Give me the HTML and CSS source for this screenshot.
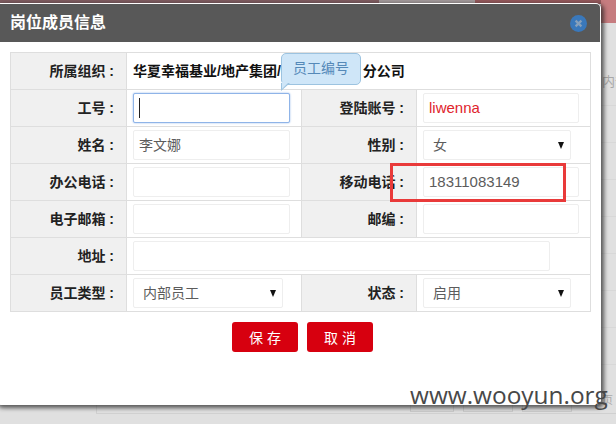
FILE: index.html
```html
<!DOCTYPE html>
<html lang="zh">
<head>
<meta charset="utf-8">
<title>岗位成员信息</title>
<link rel="stylesheet" href="styles.css">
</head>
<body>
<div class="backdrop">
  <div class="bg-top">
    <span class="seg seg-a"></span><span class="seg seg-b"></span><span class="seg seg-c"></span>
  </div>
  <div class="bg-right"></div>
  <div class="bg-lines"></div>
  <div class="bg-text">内部</div>
  <div class="bg-foot">
    <span class="bg-cell c1"></span><span class="bg-cell c2"></span><span class="bg-cell c2"></span><span class="bg-cell-text">页</span>
  </div>
</div>
<div class="dialog">
  <header class="head">
    <h1 class="title">岗位成员信息</h1>
    <svg class="close" width="17" height="17" viewBox="0 0 17 17"><circle cx="8.5" cy="8.5" r="8.5" fill="#3a78bb"/><path d="M5.6 5.6l5.8 5.8M11.4 5.6l-5.8 5.8" stroke="#87a0bb" stroke-width="2.2"/></svg>
  </header>
  <div class="body">
    <div class="form">
      <div class="row">
        <div class="lab l1">所属组织 :</div>
        <div class="val org"><span>华夏幸福基业/地产集团/</span><span class="gap"></span><span>分公司</span></div>
      </div>
      <div class="row">
        <div class="lab l1">工号 :</div>
        <div class="val v1"><div class="inp focus"><span class="caret"></span></div></div>
        <div class="lab l2">登陆账号 :</div>
        <div class="val v2"><div class="inp v2i red latin">liwenna</div></div>
      </div>
      <div class="row">
        <div class="lab l1">姓名 :</div>
        <div class="val v1"><div class="inp">李文娜</div></div>
        <div class="lab l2">性别 :</div>
        <div class="val v2"><div class="inp sel"><span class="pad">女</span><span class="arrow"></span></div></div>
      </div>
      <div class="row">
        <div class="lab l1">办公电话 :</div>
        <div class="val v1"><div class="inp"></div></div>
        <div class="lab l2">移动电话 :</div>
        <div class="val v2"><div class="inp v2i latin">18311083149</div></div>
      </div>
      <div class="row">
        <div class="lab l1">电子邮箱 :</div>
        <div class="val v1"><div class="inp"></div></div>
        <div class="lab l2">邮编 :</div>
        <div class="val v2"><div class="inp v2i"></div></div>
      </div>
      <div class="row">
        <div class="lab l1">地址 :</div>
        <div class="val"><div class="inp wide"></div></div>
      </div>
      <div class="row">
        <div class="lab l1">员工类型 :</div>
        <div class="val v1"><div class="inp sel s1"><span class="pad">内部员工</span><span class="arrow"></span></div></div>
        <div class="lab l2">状态 :</div>
        <div class="val v2"><div class="inp sel"><span class="pad">启用</span><span class="arrow"></span></div></div>
      </div>
    </div>
    <div class="actions">
      <button class="btn" type="button">保 存</button>
      <button class="btn" type="button">取 消</button>
    </div>
  </div>
  <div class="tip">员工编号</div>
  <div class="mark"></div>
  <div class="wm">www.wooyun.org</div>
</div>
</body>
</html>
```
FILE: styles.css
```css
html, body { margin: 0; padding: 0; }
body {
  width: 616px; height: 424px; overflow: hidden; position: relative;
  background: #e0e0e0;
  font-family: "Liberation Sans", "Noto Sans CJK SC", sans-serif;
}
.backdrop { position: absolute; inset: 0; overflow: hidden; }
.bg-top { height: 4px; display: flex; }
.seg { display: block; height: 100%; }
.seg-a { width: 379px; background: #7f5c60; }
.seg-b { width: 96px; background: #a39a9b; }
.seg-c { flex: 1; background: #94585b; }
.bg-right { position: absolute; left: 601px; top: 0; width: 15px; height: 23px; background: #c67c7f; }
.bg-lines {
  position: absolute; left: 601px; top: 105px; width: 15px; height: 290px;
  background: repeating-linear-gradient(to bottom, #d8d8d8 0, #d8d8d8 1px, transparent 1px, transparent 37px);
}
.bg-text { position: absolute; left: 602px; top: 74px; font-size: 13px; line-height: 16px; color: #a8a8a8; white-space: nowrap; }
.bg-foot {
  position: absolute; left: 96px; top: 404px; right: 0; height: 10px; box-sizing: border-box;
  border-left: 1px solid #d0d0d0; border-bottom: 1px solid #d0d0d0;
  display: flex; gap: 9px; padding-left: 313px;
}
.bg-cell { height: 8px; border: 1px solid #cccccc; border-top: 0; box-sizing: border-box; }
.c1 { width: 44px; }
.c2 { width: 50px; }
.bg-cell-text { font-size: 11px; line-height: 10px; color: #aaa; margin-left: 21px; margin-top: -9px; }
.dialog {
  position: absolute; left: -4px; top: 3px; width: 605px; height: 402px; box-sizing: border-box;
  background: #fff; border: 1px solid #fff; border-radius: 5px;
  box-shadow: 2px 2px 4px 1px rgba(30,30,30,.7);
  display: flex; flex-direction: column;
}
.head {
  height: 38px; background: #585858; border-radius: 4px 4px 0 0;
  display: flex; align-items: center; justify-content: space-between;
  padding: 0 13px; flex: none;
}
.title { margin: 0; font-size: 16px; font-weight: 700; color: #fff; line-height: 38px; }
.body { padding: 10px 0 0 13px; }
.form { width: 581px; border: 1px solid #dedede; box-sizing: border-box; }
.row { height: 37px; display: flex; border-bottom: 1px solid #dedede; box-sizing: border-box; }
.row:last-child { height: 36px; border-bottom: 0; }
.lab {
  background: #f0f0f0; font-size: 14px; font-weight: 700; color: #222;
  display: flex; align-items: center; justify-content: flex-end; box-sizing: border-box;
  border-right: 1px solid #dedede; padding: 0 12px 2px 0; flex: none; white-space: pre;
}
.l1 { width: 116px; }
.l2 { width: 116px; border-left: 1px solid #dedede; }
.val { padding: 3px 0 0 6px; font-size: 14px; flex: 1; box-sizing: border-box; }
.v1 { flex: none; width: 174px; }
.v2 { flex: 1; }
.org { font-weight: 700; color: #111; display: flex; align-items: center; padding: 0 0 2px 6px; white-space: nowrap; }
.gap { width: 82px; flex: none; }
.inp {
  width: 157px; height: 30px; box-sizing: border-box; border: 1px solid #eeeeee; border-radius: 2px;
  padding: 0 5px; font-size: 14px; line-height: 28px; color: #5c5c5c; background: #fff; position: relative;
}
.v2i { width: 156px; }
.latin { font-size: 15px; }
.focus { border: 1px solid #8fb4e8; box-shadow: 0 0 2px #8fb4e8; }
.caret { display: inline-block; width: 1px; height: 20px; background: #222; vertical-align: middle; margin-top: -2px; }
.red { color: #e0242c; }
.wide { width: 417px; }
.sel { width: 148px; }
.s1 { width: 150px; }
.pad { padding-left: 4px; }
.arrow { position: absolute; right: 6px; top: 11px; width: 0; height: 0; border-left: 3.5px solid transparent; border-right: 3.5px solid transparent; border-top: 7px solid #111; }
.actions { display: flex; gap: 9px; padding: 10px 0 0 222px; }
.btn {
  width: 66px; height: 30px; border: 0; border-radius: 3px; background: #d7000f; color: #fff;
  font-family: inherit; font-size: 14px; font-weight: 400; padding: 0;
}
.tip {
  position: absolute; left: 284px; top: 49px; width: 80px; height: 32px; box-sizing: border-box;
  background: #cfe6f8; border: 1px solid #9cc3e0; border-radius: 5px; color: #5589b8;
  font-size: 14px; line-height: 28px; text-align: center;
}
.tip::before {
  content: ""; position: absolute; left: -1px; top: 29px; width: 0; height: 0;
  border-left: 9px solid #9cc3e0; border-bottom: 8px solid transparent;
}
.tip::after {
  content: ""; position: absolute; left: 0; top: 28px; width: 0; height: 0;
  border-left: 7px solid #cfe6f8; border-bottom: 7px solid transparent;
}
.mark { position: absolute; left: 393px; top: 159px; width: 170px; height: 33px; border: 3px solid #e93a3a; pointer-events: none; }
.wm { position: absolute; left: 413px; top: 375px; font-size: 24.4px; color: #484848; white-space: nowrap; font-family: "Open Sans", sans-serif; line-height: 32px; }
```
